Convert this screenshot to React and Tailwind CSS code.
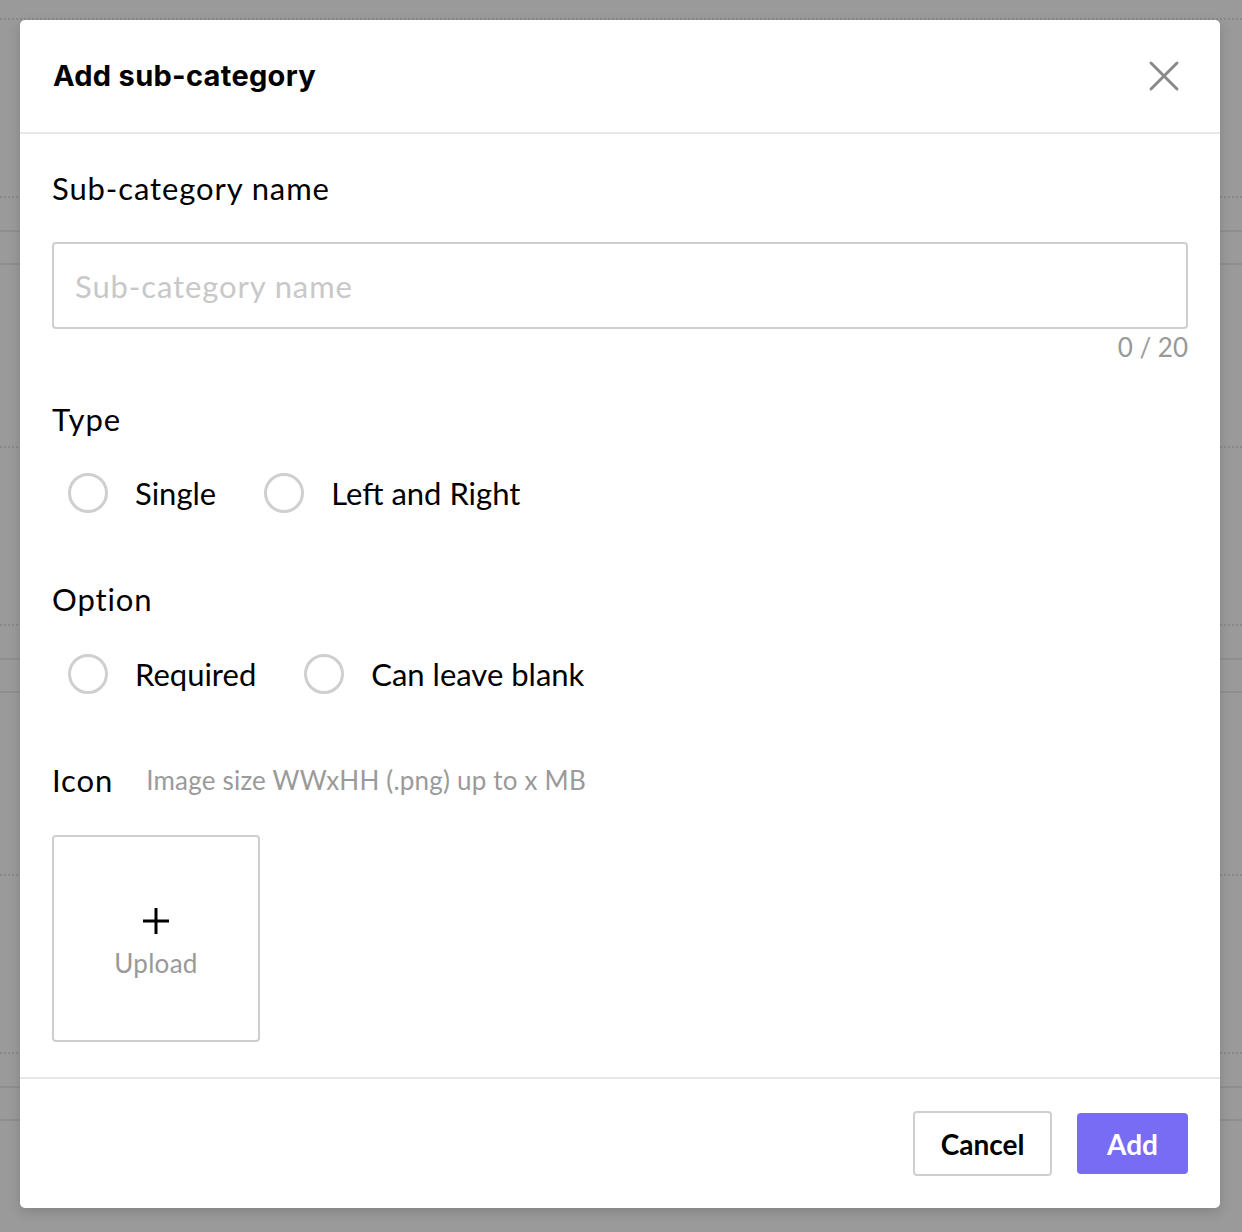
import { useState } from 'react';

const bodyFont = { fontFamily: 'Lato, "Noto Sans", sans-serif' };

const BackdropBlock = () => (
  <div className="h-[428px]">
    <div className="border-t-2 border-dotted border-[#888]" />
    <div className="h-[176px]" />
    <div className="border-t-2 border-dotted border-[#888]" />
    <div className="h-[32px]" />
    <div className="border-t-2 border-[#8e8e8e]" />
    <div className="h-[31px]" />
    <div className="border-t-2 border-[#8e8e8e]" />
  </div>
);

const Radio = ({ label, checked, onClick }) => (
  <button type="button" onClick={onClick} className="flex items-center gap-[27px] h-[40px]">
    <span className="w-[40px] h-[40px] rounded-full border-[3px] border-[#cfcfcf] bg-white flex items-center justify-center">
      {checked && <span className="w-[18px] h-[18px] rounded-full bg-[#786cf5]" />}
    </span>
    <span className="text-[31px] text-black leading-[40px]">{label}</span>
  </button>
);

const App = () => {
  const [name, setName] = useState('');
  const [type, setType] = useState('');
  const [option, setOption] = useState('');

  return (
    <div className="relative w-[1242px] h-[1232px] overflow-hidden bg-[#9a9a9a]" style={bodyFont}>
      {/* page behind the dialog */}
      <div className="pt-[18px]">
        <BackdropBlock />
        <BackdropBlock />
        <BackdropBlock />
      </div>

      <div className="absolute inset-0 px-[20px] pt-[20px]">
        <div className="w-[1200px] h-[1188px] bg-white rounded-[5px] shadow-[0_4px_12px_rgba(0,0,0,0.15)] flex flex-col">
          <div className="h-[114px] shrink-0 border-b-2 border-[#e8e8e8] flex items-center justify-between pl-[33px] pr-[40px]">
            <h1
              className="text-[29px] font-bold text-black tracking-[0.3px]"
              style={{ fontFamily: 'Inter, "Noto Sans", sans-serif' }}
            >
              Add sub-category
            </h1>
            <button type="button" className="w-[32px] h-[32px] flex items-center justify-center">
              <svg width="32" height="32" viewBox="0 0 32 32" fill="none">
                <path d="M3 3L29 29M29 3L3 29" stroke="#8a8a8a" strokeWidth="3" strokeLinecap="round" />
              </svg>
            </button>
          </div>

          <div className="flex-1 px-[32px] pt-[34px]">
            <p className="text-[31px] tracking-[0.9px] leading-[40px] text-black">Sub-category name</p>
            <input
              value={name}
              maxLength={20}
              onChange={(e) => setName(e.target.value)}
              placeholder="Sub-category name"
              className="mt-[34px] w-full h-[87px] border-2 border-[#cfcfcf] rounded-[4px] px-[21px] text-[31px] tracking-[0.9px] text-black placeholder:text-[#c8c8c8] outline-none"
            />
            <p className="text-right text-[26px] leading-[36px] text-[#999]">{name.length} / 20</p>

            <p className="mt-[34px] text-[31px] tracking-[0.9px] leading-[40px] text-black">Type</p>
            <div className="mt-[34px] pl-[16px] flex gap-[48px]">
              <Radio label="Single" checked={type === 'single'} onClick={() => setType('single')} />
              <Radio label="Left and Right" checked={type === 'lr'} onClick={() => setType('lr')} />
            </div>

            <p className="mt-[66px] text-[31px] tracking-[0.9px] leading-[40px] text-black">Option</p>
            <div className="mt-[35px] pl-[16px] flex gap-[48px]">
              <Radio label="Required" checked={option === 'req'} onClick={() => setOption('req')} />
              <Radio label="Can leave blank" checked={option === 'blank'} onClick={() => setOption('blank')} />
            </div>

            <div className="mt-[66px] flex items-center gap-[33px] h-[40px]">
              <span className="text-[31px] tracking-[0.9px] text-black">Icon</span>
              <span className="text-[26px] tracking-[0.2px] text-[#9a9a9a]">Image size WWxHH (.png) up to x MB</span>
            </div>

            <button
              type="button"
              className="mt-[35px] w-[208px] h-[207px] border-2 border-[#cfcfcf] rounded-[4px] flex flex-col items-center justify-center"
            >
              <svg width="30" height="30" viewBox="0 0 30 30" fill="none" className="mt-[10px]">
                <path d="M15 2V28M2 15H28" stroke="#000" strokeWidth="3" />
              </svg>
              <span className="mt-[9px] text-[26px] tracking-[0.3px] leading-[36px] text-[#999]">Upload</span>
            </button>
          </div>

          <div className="h-[131px] shrink-0 border-t-2 border-[#e8e8e8] flex items-center justify-end gap-[25px] pr-[32px]">
            <button
              type="button"
              className="w-[139px] h-[65px] border-2 border-[#cfcfcf] rounded-[4px] text-[28px] font-bold text-black"
            >
              Cancel
            </button>
            <button
              type="button"
              className="w-[111px] h-[61px] bg-[#786cf5] rounded-[4px] text-[28px] font-bold text-white"
            >
              Add
            </button>
          </div>
        </div>
      </div>
    </div>
  );
};

export default App;
